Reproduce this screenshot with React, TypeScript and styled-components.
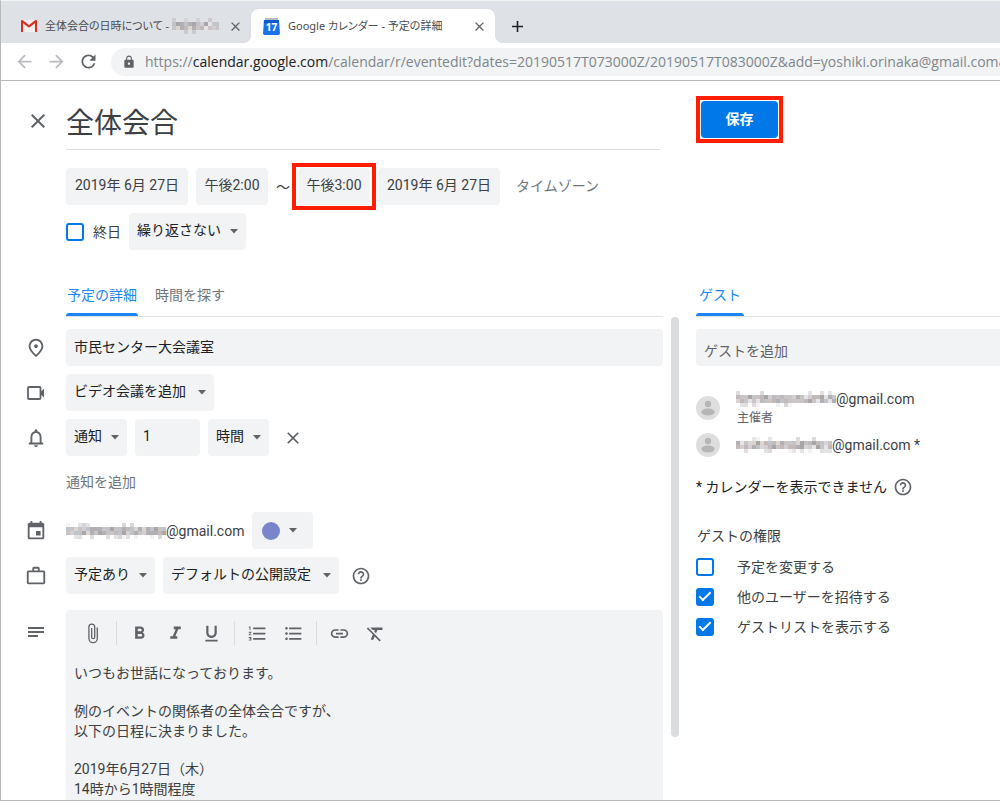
import React from "react";
import styled, { createGlobalStyle, css } from "styled-components";
import {
  MdAdd,
  MdArrowBack,
  MdArrowForward,
  MdClose,
  MdEvent,
  MdFormatBold,
  MdFormatClear,
  MdFormatItalic,
  MdFormatListBulleted,
  MdFormatListNumbered,
  MdFormatUnderlined,
  MdHelpOutline,
  MdLink,
  MdLock,
  MdNotificationsNone,
  MdOutlinePlace,
  MdRefresh,
  MdWorkOutline,
} from "react-icons/md";

const color = {
  text: "#3c4043",
  strong: "#202124",
  muted: "#70757a",
  icon: "#5f6368",
  field: "#f1f3f4",
  line: "#e0e2e5",
  frame: "#b8b8b8",
  blue: "#0078e7",
  tabBlue: "#1a85f3",
  red: "#ff1e00",
};

const GlobalStyle = createGlobalStyle`
  *, *::before, *::after { box-sizing: border-box; }
  body {
    margin: 0;
    background: #fff;
    color: ${color.text};
    font: 14px/20px Roboto, "Noto Sans CJK JP", sans-serif;
  }
  button, input, select { font: inherit; color: inherit; margin: 0; }
  button { border: 0; padding: 0; background: none; cursor: pointer; }
  p { margin: 0; }
  svg { display: block; flex: none; }
`;

const Window = styled.div`
  min-height: 100vh;
  display: flex;
  flex-direction: column;
  border: 1px solid ${color.frame};
  border-top-color: #f4f4f4;
  border-right: 0;
  overflow: hidden;
`;

/* ---------- browser chrome ---------- */

const TabStrip = styled.div`
  display: flex;
  align-items: flex-end;
  height: 42px;
  background: #dee1e6;
`;

const BrowserTab = styled.div<{ $active?: boolean }>`
  position: relative;
  display: flex;
  align-items: center;
  gap: 8px;
  height: 34px;
  padding: 0 8px 0 12px;
  width: ${(p) => (p.$active ? 244 : 242)}px;
  margin-left: ${(p) => (p.$active ? 0 : 8)}px;
  color: #4a4d51;
  font: 11px/16px "Noto Sans", "Noto Sans CJK JP", sans-serif;
  font-feature-settings: "palt";
  white-space: nowrap;
  ${(p) =>
    p.$active &&
    css`
      background: #fff;
      border-radius: 8px 8px 0 0;
      &::before,
      &::after {
        content: "";
        position: absolute;
        bottom: 0;
        width: 8px;
        height: 8px;
      }
      &::before {
        right: 100%;
        background: radial-gradient(circle at 0 0, transparent 8px, #fff 8px);
      }
      &::after {
        left: 100%;
        background: radial-gradient(circle at 100% 0, transparent 8px, #fff 8px);
      }
    `}
`;

const TabTitle = styled.span`
  flex: 1;
  display: flex;
  align-items: center;
  gap: 3px;
  min-width: 0;
  overflow: hidden;
`;

const IconButton = styled.button<{ $size?: number; $tone?: string }>`
  display: grid;
  place-items: center;
  flex: none;
  width: ${(p) => p.$size ?? 24}px;
  height: ${(p) => p.$size ?? 24}px;
  color: ${(p) => p.$tone ?? color.icon};
`;

const NewTab = styled(IconButton)`
  margin: 0 0 5px 10px;
`;

const Toolbar = styled.div`
  display: flex;
  align-items: center;
  height: 38px;
  padding-left: 11px;
  gap: 8px;
  border-bottom: 1px solid ${color.frame};
`;

const AddressBar = styled.div`
  flex: 1;
  min-width: 0;
  display: flex;
  align-items: center;
  gap: 9px;
  height: 28px;
  margin-left: 3px;
  padding-left: 11px;
  border-radius: 14px 0 0 14px;
  background: ${color.field};
  color: #80868b;
  font: 14px/20px "Open Sans", sans-serif;
  white-space: nowrap;
  overflow: hidden;
`;

const Host = styled.span`
  color: ${color.strong};
`;

/* ---------- page ---------- */

const Header = styled.header`
  display: grid;
  grid-template-columns: 65px minmax(0, 1fr) 304px;
  align-items: start;
  padding-top: 15px;
`;

const CloseButton = styled(IconButton)`
  margin: 13px 0 0 25px;
`;

const TitleInput = styled.input`
  height: 54px;
  margin-right: 36px;
  padding: 0 0 4px;
  border: 0;
  border-bottom: 1px solid #dadce0;
  font-size: 28px;
  outline: none;
`;

const highlight = css`
  position: relative;
  &::after {
    content: "";
    position: absolute;
    inset: -5px -6px;
    border: 4px solid ${color.red};
    pointer-events: none;
  }
`;

const SaveFrame = styled.div`
  justify-self: start;
  padding: 1px;
  border: 4px solid ${color.red};
`;

const SaveButton = styled.button`
  display: block;
  width: 77px;
  height: 37px;
  padding-bottom: 2px;
  border-radius: 4px;
  background: ${color.blue};
  color: #fff;
  font-weight: 700;
`;

const Schedule = styled.section`
  display: flex;
  flex-direction: column;
  gap: 8px;
  padding: 18px 0 0 65px;
`;

const Row = styled.div`
  display: flex;
  align-items: center;
  gap: 8px;
  min-height: 37px;
`;

const Chip = styled.button<{ $width?: number; $marked?: boolean }>`
  min-width: ${(p) => p.$width ?? 0}px;
  height: 37px;
  padding: 0 8px 4px;
  border-radius: 4px;
  background: ${color.field};
  white-space: nowrap;
  ${(p) => p.$marked && highlight}
`;

const TextButton = styled.button<{ $indent?: number }>`
  height: 37px;
  margin-left: ${(p) => p.$indent ?? 0}px;
  padding-bottom: 2px;
  color: ${color.muted};
`;

const SelectBox = styled.label`
  position: relative;
  display: inline-flex;
  color: ${color.strong};
  > svg {
    position: absolute;
    right: 8px;
    top: 16px;
    pointer-events: none;
  }
`;

const NativeSelect = styled.select<{ $wide?: boolean }>`
  appearance: none;
  height: 37px;
  padding: 0 ${(p) => (p.$wide ? 28 : 25)}px 4px 8px;
  border: 0;
  border-radius: 4px;
  background: ${color.field};
  outline: none;
`;

const CheckLabel = styled.label<{ $gap: number }>`
  display: flex;
  align-items: center;
  gap: ${(p) => p.$gap}px;
`;

const Checkbox = styled.input`
  appearance: none;
  flex: none;
  display: grid;
  place-items: center;
  width: 18px;
  height: 18px;
  border: 2px solid ${color.blue};
  border-radius: 3px;
  background: #fff;
  &:checked {
    background: ${color.blue};
  }
  &:checked::after {
    content: "";
    width: 12px;
    height: 6px;
    border: solid #fff;
    border-width: 0 0 2px 2px;
    transform: translateY(-2px) rotate(-45deg);
  }
`;

const Details = styled.main`
  flex: 1;
  display: grid;
  grid-template-columns: minmax(0, 1fr) 33px 304px;
  grid-template-rows: auto 1fr;
  margin-top: 23px;
`;

const TabList = styled.div<{ $indent?: boolean }>`
  display: flex;
  gap: 16px;
  height: 44px;
  margin-left: ${(p) => (p.$indent ? 65 : 0)}px;
  border-bottom: 1px solid ${color.line};
`;

const Tab = styled.button<{ $active?: boolean; $pad?: number }>`
  position: relative;
  padding: 0 ${(p) => p.$pad ?? 1}px;
  color: ${(p) => (p.$active ? color.tabBlue : color.muted)};
  ${(p) =>
    p.$active &&
    css`
      &::after {
        content: "";
        position: absolute;
        inset: auto 0 0;
        height: 3px;
        border-radius: 3px 3px 0 0;
        background: ${color.tabBlue};
      }
    `}
`;

const ScrollTrack = styled.div`
  grid-row: 2;
  grid-column: 2;
  padding-left: 8px;
`;

const ScrollThumb = styled.div`
  width: 8px;
  height: 87%;
  border-radius: 4px;
  background: #dadce0;
`;

const Panel = styled.div`
  grid-row: 2;
  display: flex;
  flex-direction: column;
  gap: 8px;
  padding-top: 12px;
`;

const Field = styled.div<{ $grow?: boolean; $before?: number }>`
  display: grid;
  grid-template-columns: 65px minmax(0, 1fr);
  align-items: ${(p) => (p.$grow ? "stretch" : "center")};
  flex: ${(p) => (p.$grow ? 1 : "none")};
  margin-top: ${(p) => p.$before ?? 0}px;
`;

const FieldIcon = styled.span<{ $top?: number }>`
  padding: ${(p) => p.$top ?? 0}px 0 0 24px;
  color: ${color.icon};
`;

const TextInput = styled.input<{ $width?: string }>`
  width: ${(p) => p.$width ?? "100%"};
  height: 37px;
  padding: 0 8px 4px;
  border: 0;
  border-radius: 4px;
  background: ${color.field};
  color: ${color.strong};
  outline: none;
`;

const GuestInput = styled(TextInput)`
  padding: 6px 8px 0;
  border-radius: 4px 0 0 4px;
  &::placeholder {
    color: ${color.icon};
    opacity: 1;
  }
`;

const Address = styled.span`
  display: flex;
  align-items: center;
`;

const ColorChip = styled(Chip)`
  display: flex;
  align-items: center;
  gap: 9px;
  width: 61px;
  padding: 0 10px;
`;

const Swatch = styled.span`
  width: 18px;
  height: 18px;
  border-radius: 50%;
  background: #7986cb;
`;

const Editor = styled.div`
  border-radius: 4px 4px 0 0;
  background: ${color.field};
`;

const EditorTools = styled.div`
  display: flex;
  align-items: center;
  gap: 11px;
  padding: 11px 0 0 15px;
`;

const ToolGroup = styled.div`
  display: flex;
  gap: 12px;
  & + & {
    padding-left: 10px;
    border-left: 1px solid #dadce0;
  }
`;

const EditorText = styled.div`
  display: flex;
  flex-direction: column;
  gap: 18px;
  padding: 18px 8px 0;
  outline: none;
`;

const Guests = styled.ul`
  display: flex;
  flex-direction: column;
  gap: 7px;
  margin: 15px 0 0;
  padding: 0;
  list-style: none;
`;

const Guest = styled.li`
  display: flex;
  align-items: center;
  gap: 16px;
`;

const Role = styled.div`
  padding: 1px 0 0 1px;
  color: ${color.icon};
  font-size: 12px;
  line-height: 16px;
`;

const Notice = styled.p`
  display: flex;
  align-items: center;
  gap: 6px;
  margin-top: 12px;
  color: ${color.strong};
`;

const Permissions = styled.fieldset`
  display: flex;
  flex-direction: column;
  gap: 10px;
  margin: 21px 0 0;
  padding: 0;
  border: 0;
`;

const Legend = styled.legend`
  padding: 0 0 11px 1px;
`;

/* ---------- drawings ---------- */

const Caret = () => (
  <svg width="8" height="5" viewBox="0 0 8 5" aria-hidden>
    <path d="M0 0h8L4 4.6z" fill={color.icon} />
  </svg>
);

const GmailLogo = () => (
  <svg width="16" height="12" viewBox="0 0 16 12" aria-hidden>
    <path d="M0 1.2C0 .5.5 0 1.200 0h13.600C15.500 0 16 .5 16 1.200V12H0z" fill="#f3efef" />
    <path d="M0 12V1.300C0 .2 1 -.3 1.900.3L8 5 14.100.3C15-.3 16 .2 16 1.300V12h-2V3.300L8 7.700 2 3.300V12z" fill="#d93025" />
  </svg>
);

const CalendarLogo = () => (
  <svg width="17" height="17" viewBox="0 0 17 17" aria-hidden>
    <path d="M2 0h13v3H2z" fill="#b9bdc2" />
    <path d="M1 2h15l1 13.500-1 1.500H1l-1-1.500z" fill="#1a73e8" />
    <path d="M1 2h15v3H.8z" fill="#0d5bd0" />
    <text x="8.500" y="13" textAnchor="middle" fill="#fff" fontFamily="Open Sans, sans-serif" fontSize="10" fontWeight="700">
      17
    </text>
  </svg>
);

const VideoIcon = () => (
  <svg width="22" height="22" viewBox="0 0 22 22" aria-hidden>
    <rect x="3" y="5" width="12.500" height="12" rx="1" fill="none" stroke="currentColor" strokeWidth="1.800" />
    <path d="M15.500 10L19 6.800v8.600l-3.500-3.200z" fill="currentColor" />
  </svg>
);

const NotesIcon = () => (
  <svg width="22" height="22" viewBox="0 0 22 22" aria-hidden>
    <path d="M3 6h16v2H3zM3 10h16v2H3zM3 14h10v2H3z" fill="currentColor" />
  </svg>
);

const ClipIcon = () => (
  <svg width="24" height="24" viewBox="0 0 24 24" aria-hidden>
    <path
      d="M16.300 6.500v11a4.200 4.200 0 0 1-8.400 0V6a2.900 2.900 0 0 1 5.800 0v10.200a1.500 1.500 0 0 1-3 0V7"
      fill="none"
      stroke="currentColor"
      strokeWidth="1.300"
    />
  </svg>
);

const Avatar = () => (
  <svg width="24" height="24" viewBox="0 0 24 24" aria-hidden>
    <circle cx="12" cy="12" r="12" fill="#dedede" />
    <circle cx="12" cy="8" r="3.200" fill="#b5b5b5" />
    <path d="M5.500 16c0-2.300 3-3.500 6.500-3.500s6.500 1.200 6.500 3.500-3 3.400-6.500 3.400-6.500-1.100-6.500-3.400z" fill="#b5b5b5" />
  </svg>
);

const shades = ["#c9c5c6", "#b3b0b4", "#dcd6d3", "#bfc3cb", "#a9a6a8", "#d4cdd4", "#c2b9b8", "#e4e4e6"];

/* Pixelated cover over the private part of a mail address */
const Mosaic = ({ width, seed }: { width: number; seed: number }) => {
  const cell = 4;
  const cols = Math.floor(width / cell);
  const cells = [];
  for (let r = 0; r < 4; r++) {
    for (let c = 0; c < cols; c++) {
      const n = (c * 7 + r * 5 + seed * 3 + ((c * c * (r + seed)) % 11)) % 17;
      const edge = r === 0 || r === 3;
      if (edge && n % 3 !== 0) continue;
      cells.push(
        <rect
          key={`${r}-${c}`}
          x={c * cell}
          y={r * cell}
          width={cell}
          height={cell}
          fill={shades[n % 8]}
          opacity={edge ? 0.45 : 1}
        />
      );
    }
  }
  return (
    <svg width={width} height="16" viewBox={`0 0 ${width} 16`} aria-hidden>
      {cells}
    </svg>
  );
};

const Select = ({ label, value, wide }: { label: string; value: string; wide?: boolean }) => (
  <SelectBox>
    <NativeSelect aria-label={label} defaultValue={value} $wide={wide}>
      <option>{value}</option>
    </NativeSelect>
    <Caret />
  </SelectBox>
);

const toolGroups = [
  [{ name: "添付", icon: <ClipIcon /> }],
  [
    { name: "太字", icon: <MdFormatBold size={21} /> },
    { name: "斜体", icon: <MdFormatItalic size={21} /> },
    { name: "下線", icon: <MdFormatUnderlined size={21} /> },
  ],
  [
    { name: "番号付きリスト", icon: <MdFormatListNumbered size={21} /> },
    { name: "箇条書き", icon: <MdFormatListBulleted size={21} /> },
  ],
  [
    { name: "リンク", icon: <MdLink size={21} /> },
    { name: "書式をクリア", icon: <MdFormatClear size={21} /> },
  ],
];

const permissions = [
  { text: "予定を変更する", on: false },
  { text: "他のユーザーを招待する", on: true },
  { text: "ゲストリストを表示する", on: true },
];

export default function App() {
  return (
    <>
      <GlobalStyle />
      <Window>
        <TabStrip>
          <BrowserTab>
            <GmailLogo />
            <TabTitle>
              全体会合の日時について - <Mosaic width={48} seed={2} />
            </TabTitle>
            <IconButton $size={16} aria-label="タブを閉じる">
              <MdClose size={15} />
            </IconButton>
          </BrowserTab>
          <BrowserTab $active>
            <CalendarLogo />
            <TabTitle>Google カレンダー - 予定の詳細</TabTitle>
            <IconButton $size={16} aria-label="タブを閉じる">
              <MdClose size={15} />
            </IconButton>
          </BrowserTab>
          <NewTab aria-label="新しいタブ" $tone={color.strong}>
            <MdAdd size={19} />
          </NewTab>
        </TabStrip>
        <Toolbar>
          <IconButton aria-label="戻る" $tone="#b9bbbe">
            <MdArrowBack size={21} />
          </IconButton>
          <IconButton aria-label="進む" $tone="#b9bbbe">
            <MdArrowForward size={21} />
          </IconButton>
          <IconButton aria-label="再読み込み">
            <MdRefresh size={21} />
          </IconButton>
          <AddressBar>
            <MdLock size={14} color={color.icon} />
            <span>
              https://<Host>calendar.google.com</Host>
              /calendar/r/eventedit?dates=20190517T073000Z/20190517T083000Z&amp;add=yoshiki.orinaka@gmail.com&amp;tex
            </span>
          </AddressBar>
        </Toolbar>

        <Header>
          <CloseButton aria-label="閉じる">
            <MdClose size={24} />
          </CloseButton>
          <TitleInput aria-label="タイトル" defaultValue="全体会合" />
          <SaveFrame>
            <SaveButton>保存</SaveButton>
          </SaveFrame>
        </Header>

        <Schedule>
          <Row>
            <Chip $width={122}>2019年 6月 27日</Chip>
            <Chip $width={72}>午後2:00</Chip>
            <span>～</span>
            <Chip $width={72} $marked>
              午後3:00
            </Chip>
            <Chip $width={122}>2019年 6月 27日</Chip>
            <TextButton $indent={8}>タイムゾーン</TextButton>
          </Row>
          <Row>
            <CheckLabel $gap={9}>
              <Checkbox type="checkbox" />
              終日
            </CheckLabel>
            <Select label="繰り返し" value="繰り返さない" />
          </Row>
        </Schedule>

        <Details>
          <TabList role="tablist" $indent>
            <Tab role="tab" aria-selected $active>
              予定の詳細
            </Tab>
            <Tab role="tab">時間を探す</Tab>
          </TabList>
          <span />
          <TabList role="tablist">
            <Tab role="tab" aria-selected $active $pad={3}>
              ゲスト
            </Tab>
          </TabList>

          <Panel>
            <Field>
              <FieldIcon>
                <MdOutlinePlace size={22} />
              </FieldIcon>
              <TextInput aria-label="場所" defaultValue="市民センター大会議室" />
            </Field>
            <Field>
              <FieldIcon>
                <VideoIcon />
              </FieldIcon>
              <Row>
                <Select label="ビデオ会議" value="ビデオ会議を追加" wide />
              </Row>
            </Field>
            <Field>
              <FieldIcon>
                <MdNotificationsNone size={22} />
              </FieldIcon>
              <Row>
                <Select label="通知方法" value="通知" />
                <TextInput aria-label="通知までの時間" defaultValue="1" $width="65px" />
                <Select label="単位" value="時間" />
                <IconButton $size={32} aria-label="通知を削除">
                  <MdClose size={20} />
                </IconButton>
              </Row>
            </Field>
            <Field>
              <span />
              <Row>
                <TextButton>通知を追加</TextButton>
              </Row>
            </Field>
            <Field $before={3}>
              <FieldIcon>
                <MdEvent size={22} />
              </FieldIcon>
              <Row>
                <Address>
                  <Mosaic width={100} seed={5} />
                  @gmail.com
                </Address>
                <ColorChip aria-label="予定の色">
                  <Swatch />
                  <Caret />
                </ColorChip>
              </Row>
            </Field>
            <Field>
              <FieldIcon>
                <MdWorkOutline size={22} />
              </FieldIcon>
              <Row>
                <Select label="予定の有無" value="予定あり" />
                <Select label="公開設定" value="デフォルトの公開設定" wide />
                <IconButton $size={28} aria-label="ヘルプ">
                  <MdHelpOutline size={20} />
                </IconButton>
              </Row>
            </Field>
            <Field $grow $before={8}>
              <FieldIcon $top={11}>
                <NotesIcon />
              </FieldIcon>
              <Editor>
                <EditorTools>
                  {toolGroups.map((group, i) => (
                    <ToolGroup key={i}>
                      {group.map((tool) => (
                        <IconButton key={tool.name} aria-label={tool.name}>
                          {tool.icon}
                        </IconButton>
                      ))}
                    </ToolGroup>
                  ))}
                </EditorTools>
                <EditorText role="textbox" aria-multiline aria-label="説明" contentEditable suppressContentEditableWarning>
                  <p>いつもお世話になっております。</p>
                  <p>
                    例のイベントの関係者の全体会合ですが、
                    <br />
                    以下の日程に決まりました。
                  </p>
                  <p>
                    2019年6月27日（木）
                    <br />
                    14時から1時間程度
                  </p>
                </EditorText>
              </Editor>
            </Field>
          </Panel>

          <ScrollTrack aria-hidden>
            <ScrollThumb />
          </ScrollTrack>

          <Panel>
            <GuestInput aria-label="ゲストを追加" placeholder="ゲストを追加" />
            <Guests>
              <Guest>
                <Avatar />
                <div>
                  <Address>
                    <Mosaic width={100} seed={3} />
                    @gmail.com
                  </Address>
                  <Role>主催者</Role>
                </div>
              </Guest>
              <Guest>
                <Avatar />
                <Address>
                  <Mosaic width={96} seed={7} />
                  @gmail.com *
                </Address>
              </Guest>
            </Guests>
            <Notice>
              * カレンダーを表示できません
              <MdHelpOutline size={20} color={color.icon} />
            </Notice>
            <Permissions>
              <Legend>ゲストの権限</Legend>
              {permissions.map((p) => (
                <CheckLabel key={p.text} $gap={23}>
                  <Checkbox type="checkbox" defaultChecked={p.on} />
                  {p.text}
                </CheckLabel>
              ))}
            </Permissions>
          </Panel>
        </Details>
      </Window>
    </>
  );
}
